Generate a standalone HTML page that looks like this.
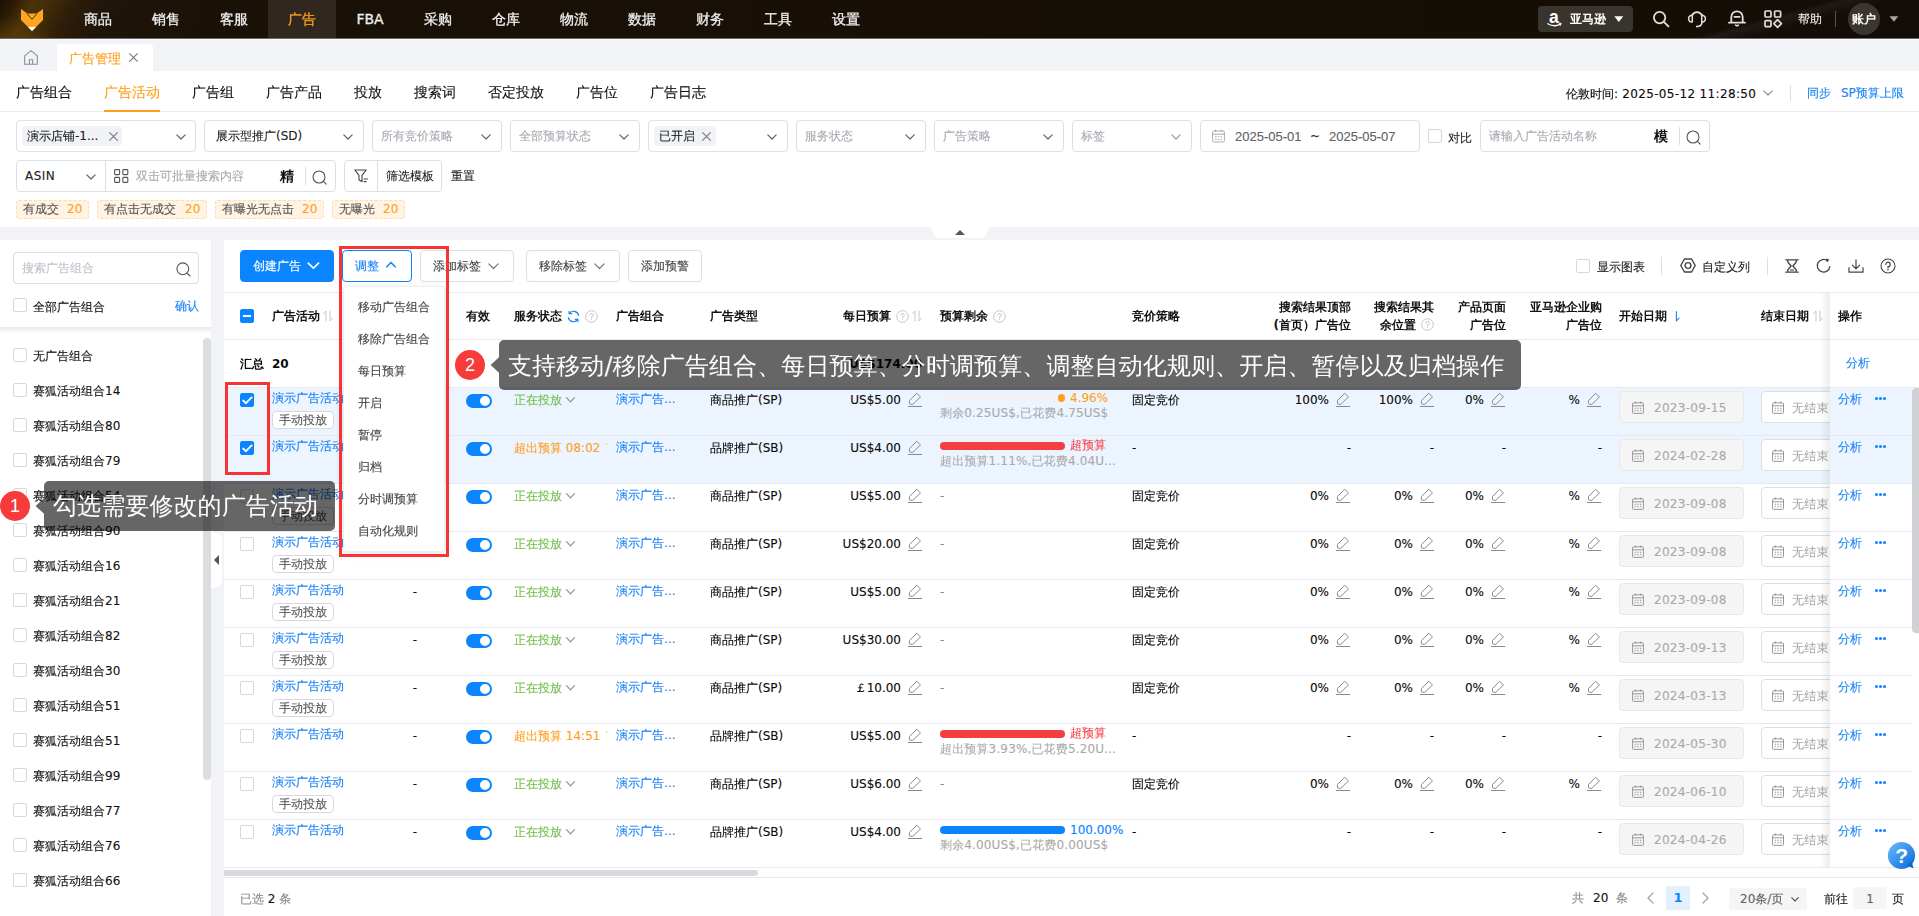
<!DOCTYPE html>
<html lang="zh-CN">
<head>
<meta charset="utf-8">
<title>广告管理</title>
<style>
*{box-sizing:border-box;margin:0;padding:0}
html,body{width:1919px;height:916px;overflow:hidden}
body{position:relative;background:#f2f3f7;font-family:"DejaVu Sans","WenQuanYi Zen Hei","Liberation Sans",sans-serif;font-size:12px;color:#0a0a0a;line-height:1;-webkit-text-stroke:.12px}
.abs{position:absolute}
.t{position:absolute;white-space:nowrap;line-height:16px;height:16px}
.b{font-weight:800;-webkit-text-stroke:0}
svg{position:absolute;overflow:visible}
/* top nav */
#nav{position:absolute;left:0;top:0;width:1919px;height:38px;background:linear-gradient(90deg,#1a1107 0%,#181006 40%,#130d07 100%);overflow:hidden}
#navb{position:absolute;left:0;top:38px;width:1919px;height:2px;background:linear-gradient(180deg,#6f6a65 0,#6f6a65 1px,#fafafc 1px,#fafafc 2px);z-index:2}
#nav .glow{position:absolute;left:0;top:0;width:200px;height:38px;background:linear-gradient(118deg,#191004 0%,#2c1c06 7%,#4b3209 15%,#452d08 22%,#2e1e08 34%,#1f150a 50%,rgba(19,13,7,0) 100%)}
#nav .glow2{position:absolute;left:-10px;top:16px;width:70px;height:30px;background:radial-gradient(ellipse at 10% 100%,rgba(110,72,10,.6),rgba(110,72,10,0) 70%)}
#nav .streak{position:absolute;left:1620px;top:0;width:300px;height:38px;background:linear-gradient(165deg,rgba(255,255,255,0) 48%,rgba(255,255,255,.05) 52%,rgba(255,255,255,0) 62%)}
#nav .act{position:absolute;left:268px;top:0;width:68px;height:38px;background:#30271f}
#nav .mi{position:absolute;top:0;height:38px;width:68px;text-align:center;line-height:38px;font-size:14px;color:#efefef;-webkit-text-stroke:.3px #efefef}
#nav .mi.on{color:#ff9f1a;-webkit-text-stroke:.3px #ff9f1a}
/* tab bar */
#tabs{position:absolute;left:0;top:38px;width:1919px;height:33px;background:#f2f3f7}
#tabs .tab{position:absolute;left:57px;top:6px;width:96px;height:27px;background:#fff;border-radius:4px 4px 0 0}
/* subnav */
#subnav{position:absolute;left:0;top:71px;width:1919px;height:41px;background:#fff;border-bottom:1px solid #e8e9ed}
#subnav .si{position:absolute;top:12px;font-size:14px;line-height:18px;color:#111;white-space:nowrap}
#subnav .si.on{color:#ff9f1a}
#subnav .ul{position:absolute;left:104px;top:39px;width:56px;height:2px;background:#ff9f1a}
/* filter */
#filter{position:absolute;left:0;top:112px;width:1919px;height:115px;background:#fff}
.box{position:absolute;height:32px;border:1px solid #dcdfe6;border-radius:4px;background:#fff}
.ph{color:#a8abb2}
.chev{stroke:#5f6368;stroke-width:1.2;fill:none;stroke-linecap:round;stroke-linejoin:round}
.tag{position:absolute;height:20px;background:#f0f2f5;border-radius:4px}
.otag{position:absolute;top:88px;height:19px;border:1px dashed #ffdcad;background:#fff3e3;border-radius:3px;font-size:12px;line-height:17px;white-space:nowrap;color:#555}
.otag i{font-style:normal;color:#ff9f1a;position:absolute;top:0}
.cb{position:absolute;width:14px;height:14px;border:1px solid #d5d8df;border-radius:2px;background:#fff}
.cb.on{background:#0a84ff;border-color:#0a84ff}
/* side */
#side{position:absolute;left:0;top:240px;width:211px;height:676px;background:#fff;overflow:hidden}
#side .it{position:absolute;left:33px;height:16px;line-height:16px;white-space:nowrap;color:#111}
/* main */
#main{position:absolute;left:224px;top:240px;width:1695px;height:676px;background:#fff;overflow:hidden}
.btn{position:absolute;top:10px;height:32px;border:1px solid #dcdfe6;border-radius:4px;background:#fff;color:#444;line-height:30px;white-space:nowrap}
.hline{position:absolute;left:0;width:1695px;height:1px;background:#e8e9ed}
.th{-webkit-text-stroke:0;position:absolute;white-space:nowrap;font-weight:800;color:#111;line-height:18px}
.row{position:absolute;left:0;width:1695px;height:48px;box-shadow:inset 0 1px 0 #e8e9ed;background:#fff}
.row.sel{background:#ecf5ff}
.row .c{position:absolute;white-space:nowrap;line-height:16px;height:16px;top:5px}
.row .r{text-align:right}
.lk{color:#1b82f5}
.gr{color:#6fbf4c}
.or{color:#ff9f1a}
.rd{color:#f5474b}
.mt{position:absolute;left:48px;top:24px;width:62px;height:18px;border:1px solid #d9d9d9;border-radius:4px;background:#fff;color:#555;line-height:16px;text-align:center}
.sw{position:absolute;left:242px;top:7px;width:26px;height:14px;border-radius:7px;background:#0a84ff}
.sw:after{content:"";position:absolute;right:2px;top:2px;width:10px;height:10px;border-radius:5px;background:#fff}
.din{position:absolute;top:4px;height:32px;border-radius:4px}
.din.s{left:1395px;width:125px;background:#f5f5f5;border:1px solid #e8e8e8;color:#aaa}
.din.e{left:1537px;width:124px;background:#fff;border:1px solid #dcdfe6;color:#aaa}
.din span{position:absolute;top:8px;line-height:16px;white-space:nowrap;letter-spacing:.3px}
.bar{position:absolute;left:716px;top:7px;width:125px;height:8px;border-radius:4px}
.sub{position:absolute;left:716px;top:18px;color:#aaa;line-height:16px;white-space:nowrap;letter-spacing:.15px}
.pen{stroke:#8a8a8a;stroke-width:1;fill:none;stroke-linecap:round;stroke-linejoin:round}
#fix{position:absolute;left:1606px;top:52px;width:82px;height:576px;background:#fff}
/* overlays */
.ov{-webkit-text-stroke:0;position:absolute;background:rgba(0,0,0,.6);border-radius:5px;letter-spacing:.1px;color:#fff;font-size:24px;white-space:nowrap}
.num{position:absolute;width:30px;height:30px;border-radius:15px;background:#f73b3b;color:#fff;font:18px/30px 'Liberation Sans',sans-serif;text-align:center;-webkit-text-stroke:0}
.redbox{position:absolute;border:3px solid #f63434}

</style>
</head>
<body>
<div id="nav">
  <div class="glow"></div><div class="glow2"></div><div class="streak"></div>
  <div class="act"></div>
  <svg style="left:20px;top:8px" width="24" height="24" viewBox="0 0 24 24"><path d="M1 1 L7.3 5.6 L16.7 5.6 L23 1 L23 12 L12 23 L1 12 Z" fill="#ffa51f"/><path d="M7 5.6 L12 11.3 L17 5.6" fill="none" stroke="#3a2608" stroke-width="0.9"/><path d="M8 19 L16 19 L12 23 Z" fill="#fff"/></svg>
  <div class="mi" style="left:64px">商品</div>
  <div class="mi" style="left:132px">销售</div>
  <div class="mi" style="left:200px">客服</div>
  <div class="mi on" style="left:268px">广告</div>
  <div class="mi" style="left:336px">FBA</div>
  <div class="mi" style="left:404px">采购</div>
  <div class="mi" style="left:472px">仓库</div>
  <div class="mi" style="left:540px">物流</div>
  <div class="mi" style="left:608px">数据</div>
  <div class="mi" style="left:676px">财务</div>
  <div class="mi" style="left:744px">工具</div>
  <div class="mi" style="left:812px">设置</div>
  <div class="abs" style="left:1538px;top:6px;width:95px;height:26px;border-radius:4px;background:#3a342e"></div>
  <svg style="left:1547px;top:10px" width="16" height="17" viewBox="0 0 16 17"><text x="2" y="12.7" font-family="Liberation Sans,sans-serif" font-weight="700" font-size="17.5" fill="#fff">a</text><path d="M0.8 13.8 Q7.5 17.6 13.4 14" fill="none" stroke="#fff" stroke-width="1.3" stroke-linecap="round"/><path d="M12 13.2 L14.2 13.4 L13.3 15.4" fill="none" stroke="#fff" stroke-width="1" stroke-linejoin="round" stroke-linecap="round"/></svg>
  <div class="t b" style="left:1570px;top:11px;color:#fff">亚马逊</div>
  <svg style="left:1614px;top:16px" width="10" height="6" viewBox="0 0 10 6"><path d="M0.3 0.2 L9.3 0.2 L4.8 6 Z" fill="#fff"/></svg>
  <svg style="left:1652px;top:10px" width="18" height="18" viewBox="0 0 18 18"><circle cx="7.6" cy="7.6" r="5.7" fill="none" stroke="#e2dfdb" stroke-width="1.8"/><path d="M11.9 11.9 L16.4 16.4" stroke="#e2dfdb" stroke-width="1.9" stroke-linecap="round"/></svg>
  <svg style="left:1687px;top:10px" width="20" height="18" viewBox="0 0 20 18"><path d="M5.2 5.2 A5.3 5.3 0 0 1 14.8 5.2" fill="none" stroke="#e2dfdb" stroke-width="1.7" stroke-linecap="round"/><path d="M5.3 5 C2.2 5.6 1.2 7.6 1.7 9.6 C2.2 11.4 3.8 12.2 5.3 12 Z" fill="none" stroke="#e2dfdb" stroke-width="1.5" stroke-linejoin="round"/><path d="M14.7 5 C17.8 5.6 18.8 7.6 18.3 9.6 C17.8 11.4 16.2 12.2 14.7 12 Z" fill="none" stroke="#e2dfdb" stroke-width="1.5" stroke-linejoin="round"/><path d="M15 12 C15 15 13 16.6 9.6 16.6" fill="none" stroke="#e2dfdb" stroke-width="1.6" stroke-linecap="round"/></svg>
  <svg style="left:1728px;top:8px" width="18" height="19" viewBox="0 0 18 19"><path d="M3.3 14.4 L3.3 9 A5.7 5.7 0 0 1 14.7 9 L14.7 14.4" fill="none" stroke="#e2dfdb" stroke-width="1.8"/><path d="M1 14.7 L17 14.7" stroke="#e2dfdb" stroke-width="1.8" stroke-linecap="round"/><path d="M6.4 8.8 L11.6 8.8" stroke="#e2dfdb" stroke-width="1.7" stroke-linecap="round"/><path d="M7.6 17.2 Q9 18.4 10.4 17.2" fill="none" stroke="#e2dfdb" stroke-width="1.6" stroke-linecap="round"/></svg>
  <svg style="left:1764px;top:10px" width="18" height="18" viewBox="0 0 18 18"><rect x="1" y="1" width="6" height="6" rx="1" fill="none" stroke="#e2dfdb" stroke-width="1.7"/><rect x="10.6" y="1" width="6" height="6" rx="1" fill="none" stroke="#e2dfdb" stroke-width="1.7"/><rect x="1" y="10.6" width="6" height="6" rx="1" fill="none" stroke="#e2dfdb" stroke-width="1.7"/><path d="M13.6 9.6 L17.4 13.6 L13.6 17.4 L9.8 13.6 Z" fill="none" stroke="#e2dfdb" stroke-width="1.6" stroke-linejoin="round"/></svg>
  <div class="t" style="left:1798px;top:11px;color:#ececec">帮助</div>
  <div class="abs" style="left:1835px;top:11px;width:1px;height:16px;background:#5a554f"></div>
  <div class="abs" style="left:1848px;top:3px;width:32px;height:32px;border-radius:16px;background:#3b3530"></div>
  <div class="t b" style="left:1852px;top:11px;color:#fff">账户</div>
  <svg style="left:1889px;top:16px" width="10" height="6" viewBox="0 0 10 6"><path d="M0.5 0.2 L9.3 0.2 L4.9 5.8 Z" fill="#a9a6a2"/></svg>
</div>
<div id="navb"></div>
<div id="tabs">
  <svg style="left:24px;top:12px" width="14" height="15" viewBox="0 0 14 15"><path d="M0.7 5.8 L7 0.6 L13.3 5.8 L13.3 14.2 L0.7 14.2 Z" fill="none" stroke="#8a8f99" stroke-width="1.1" stroke-linejoin="round"/><path d="M5.4 14.2 L5.4 9.8 L8.6 9.8 L8.6 14.2" fill="none" stroke="#8a8f99" stroke-width="1.1"/></svg>
  <div class="tab"></div>
  <div class="t" style="left:69px;top:13px;font-size:13px;color:#ff9f1a">广告管理</div>
  <svg style="left:129px;top:15px" width="9" height="9" viewBox="0 0 9 9"><path d="M0.6 0.6 L8.4 8.4 M8.4 0.6 L0.6 8.4" stroke="#73777f" stroke-width="1.1" stroke-linecap="round"/></svg>
</div>
<div id="subnav">
  <div class="si" style="left:16px">广告组合</div>
  <div class="si on" style="left:104px">广告活动</div>
  <div class="si" style="left:192px">广告组</div>
  <div class="si" style="left:266px">广告产品</div>
  <div class="si" style="left:354px">投放</div>
  <div class="si" style="left:414px">搜索词</div>
  <div class="si" style="left:488px">否定投放</div>
  <div class="si" style="left:576px">广告位</div>
  <div class="si" style="left:650px">广告日志</div>
  <div class="ul"></div>
  <div class="t" style="left:1566px;top:15px">伦敦时间:<span style="letter-spacing:.35px"> 2025-05-12 11:28:50</span></div>
  <svg style="left:1763px;top:19px" width="10" height="6" viewBox="0 0 10 6"><path class="chev" d="M0.8 0.8 L5 5 L9.2 0.8" style="stroke:#8a8f99"/></svg>
  <div class="abs" style="left:1790px;top:14px;width:1px;height:16px;background:#dcdfe6"></div>
  <div class="t lk" style="left:1807px;top:14px">同步</div>
  <div class="t lk" style="left:1841px;top:14px">SP预算上限</div>
</div>
<div id="filter">
  <!-- row 1: y 120-152 => top 8 -->
  <div class="box" style="left:16px;top:8px;width:180px"></div>
  <div class="tag" style="left:22px;top:14px;width:100px"></div>
  <div class="t" style="left:27px;top:16px;color:#222">演示店铺-1...</div>
  <svg style="left:109px;top:20px" width="9" height="9" viewBox="0 0 9 9"><path d="M0.6 0.6 L8.4 8.4 M8.4 0.6 L0.6 8.4" stroke="#73777f" stroke-width="1.1" stroke-linecap="round"/></svg>
  <svg style="left:176px;top:22px" width="10" height="6" viewBox="0 0 10 6"><path class="chev" d="M0.8 0.8 L5 5 L9.2 0.8"/></svg>

  <div class="box" style="left:204px;top:8px;width:160px"></div>
  <div class="t" style="left:216px;top:16px;color:#222">展示型推广(SD)</div>
  <svg style="left:343px;top:22px" width="10" height="6" viewBox="0 0 10 6"><path class="chev" d="M0.8 0.8 L5 5 L9.2 0.8"/></svg>

  <div class="box" style="left:372px;top:8px;width:130px"></div>
  <div class="t ph" style="left:381px;top:16px">所有竞价策略</div>
  <svg style="left:481px;top:22px" width="10" height="6" viewBox="0 0 10 6"><path class="chev" d="M0.8 0.8 L5 5 L9.2 0.8"/></svg>

  <div class="box" style="left:510px;top:8px;width:130px"></div>
  <div class="t ph" style="left:519px;top:16px">全部预算状态</div>
  <svg style="left:619px;top:22px" width="10" height="6" viewBox="0 0 10 6"><path class="chev" d="M0.8 0.8 L5 5 L9.2 0.8"/></svg>

  <div class="box" style="left:648px;top:8px;width:140px"></div>
  <div class="tag" style="left:654px;top:14px;width:62px"></div>
  <div class="t" style="left:659px;top:16px;color:#222">已开启</div>
  <svg style="left:702px;top:20px" width="9" height="9" viewBox="0 0 9 9"><path d="M0.6 0.6 L8.4 8.4 M8.4 0.6 L0.6 8.4" stroke="#73777f" stroke-width="1.1" stroke-linecap="round"/></svg>
  <svg style="left:767px;top:22px" width="10" height="6" viewBox="0 0 10 6"><path class="chev" d="M0.8 0.8 L5 5 L9.2 0.8"/></svg>

  <div class="box" style="left:796px;top:8px;width:130px"></div>
  <div class="t ph" style="left:805px;top:16px">服务状态</div>
  <svg style="left:905px;top:22px" width="10" height="6" viewBox="0 0 10 6"><path class="chev" d="M0.8 0.8 L5 5 L9.2 0.8"/></svg>

  <div class="box" style="left:934px;top:8px;width:130px"></div>
  <div class="t ph" style="left:943px;top:16px">广告策略</div>
  <svg style="left:1043px;top:22px" width="10" height="6" viewBox="0 0 10 6"><path class="chev" d="M0.8 0.8 L5 5 L9.2 0.8"/></svg>

  <div class="box" style="left:1072px;top:8px;width:120px"></div>
  <div class="t ph" style="left:1081px;top:16px">标签</div>
  <svg style="left:1171px;top:22px" width="10" height="6" viewBox="0 0 10 6"><path class="chev" d="M0.8 0.8 L5 5 L9.2 0.8" style="stroke:#9a9ea6"/></svg>

  <div class="box" style="left:1200px;top:8px;width:220px"></div>
  <svg style="left:1212px;top:17px" width="13" height="14" viewBox="0 0 13 14"><rect x="0.6" y="2" width="11.8" height="11" rx="1.2" fill="none" stroke="#a8abb2" stroke-width="1"/><path d="M0.6 5.2 L12.4 5.2 M3.6 0.6 L3.6 3 M9.4 0.6 L9.4 3" stroke="#a8abb2" stroke-width="1"/><path d="M3 7.8 L10 7.8 M3 10.4 L10 10.4" stroke="#a8abb2" stroke-width="1" stroke-dasharray="1.6 1.1"/></svg>
  <div class="t" style="left:1235px;top:17px;font:13px/16px 'Liberation Sans',sans-serif;color:#606266">2025-05-01</div>
  <div class="t" style="left:1310px;top:16px;color:#333">~</div>
  <div class="t" style="left:1329px;top:17px;font:13px/16px 'Liberation Sans',sans-serif;color:#606266">2025-05-07</div>

  <div class="cb" style="left:1428px;top:17px"></div>
  <div class="t" style="left:1448px;top:18px;color:#222">对比</div>

  <div class="box" style="left:1480px;top:8px;width:230px"></div>
  <div class="t ph" style="left:1489px;top:16px">请输入广告活动名称</div>
  <div class="t b" style="left:1654px;top:16px;font-size:14px;color:#111">模</div>
  <div class="abs" style="left:1679px;top:15px;width:1px;height:18px;background:#dcdfe6"></div>
  <svg style="left:1686px;top:18px" width="15" height="15" viewBox="0 0 15 15"><circle cx="7" cy="7" r="6" fill="none" stroke="#555" stroke-width="1.1"/><path d="M11.4 11.4 L14.2 14.2" stroke="#555" stroke-width="1.1" stroke-linecap="round"/></svg>

  <!-- row 2: y 160-192 => top 48 -->
  <div class="box" style="left:16px;top:48px;width:320px"></div>
  <div class="abs" style="left:105px;top:49px;width:1px;height:30px;background:#dcdfe6"></div>
  <div class="t" style="left:25px;top:56px;color:#222;letter-spacing:.45px">ASIN</div>
  <svg style="left:86px;top:62px" width="10" height="6" viewBox="0 0 10 6"><path class="chev" d="M0.8 0.8 L5 5 L9.2 0.8"/></svg>
  <svg style="left:114px;top:57px" width="15" height="14" viewBox="0 0 15 14"><rect x="0.6" y="0.6" width="5" height="5" rx="0.8" fill="none" stroke="#555" stroke-width="1.1"/><rect x="8.8" y="0.6" width="5" height="5" rx="0.8" fill="none" stroke="#555" stroke-width="1.1"/><rect x="0.6" y="8.4" width="5" height="5" rx="0.8" fill="none" stroke="#555" stroke-width="1.1"/><rect x="8.8" y="8.4" width="5" height="5" rx="0.8" fill="none" stroke="#555" stroke-width="1.1"/></svg>
  <div class="t ph" style="left:136px;top:56px">双击可批量搜索内容</div>
  <div class="t b" style="left:280px;top:56px;font-size:14px;color:#111">精</div>
  <div class="abs" style="left:305px;top:55px;width:1px;height:18px;background:#dcdfe6"></div>
  <svg style="left:312px;top:58px" width="15" height="15" viewBox="0 0 15 15"><circle cx="7" cy="7" r="6" fill="none" stroke="#555" stroke-width="1.1"/><path d="M11.4 11.4 L14.2 14.2" stroke="#555" stroke-width="1.1" stroke-linecap="round"/></svg>

  <div class="box" style="left:344px;top:48px;width:98px"></div>
  <div class="abs" style="left:377px;top:49px;width:1px;height:30px;background:#dcdfe6"></div>
  <svg style="left:354px;top:57px" width="15" height="15" viewBox="0 0 15 15"><path d="M0.8 1 L12.2 1 L8 6.4 L8 12.6 L5 11 L5 6.4 Z" fill="none" stroke="#444" stroke-width="1.1" stroke-linejoin="round"/><path d="M10 10 L13.6 10 M10 12.6 L12.2 12.6" stroke="#444" stroke-width="1.1" stroke-linecap="round"/></svg>
  <div class="t" style="left:386px;top:56px;color:#222">筛选模板</div>
  <div class="t" style="left:451px;top:56px;color:#222">重置</div>

  <!-- tags row -->
  <div class="otag" style="left:16px;width:73px"><span style="position:absolute;left:6px">有成交</span><i style="left:50px">20</i></div>
  <div class="otag" style="left:97px;width:110px"><span style="position:absolute;left:6px">有点击无成交</span><i style="left:87px">20</i></div>
  <div class="otag" style="left:215px;width:109px"><span style="position:absolute;left:6px">有曝光无点击</span><i style="left:86px">20</i></div>
  <div class="otag" style="left:332px;width:73px"><span style="position:absolute;left:6px">无曝光</span><i style="left:50px">20</i></div>
</div>
<!-- collapse handle top -->
<svg style="left:931px;top:227px" width="58" height="12" viewBox="0 0 58 12"><path d="M0 0 L58 0 L55 8 Q53.6 11 50.6 11 L7.4 11 Q4.4 11 3 8 Z" fill="#fff"/><path d="M24 8 L34 8 L29 3 Z" fill="#555"/></svg>

<div id="side">
  <div class="box" style="left:13px;top:12px;width:186px"></div>
  <div class="t" style="left:22px;top:20px;color:#c0c4cc">搜索广告组合</div>
  <svg style="left:176px;top:22px" width="15" height="15" viewBox="0 0 15 15"><circle cx="6.8" cy="6.8" r="5.9" fill="none" stroke="#555" stroke-width="1.1"/><path d="M11.1 11.1 L14 14" stroke="#555" stroke-width="1.1" stroke-linecap="round"/></svg>
  <div class="cb" style="left:13px;top:58px"></div>
  <div class="it" style="top:59px">全部广告组合</div>
  <div class="t lk" style="left:175px;top:58px">确认</div>
  <div class="abs" style="left:0;top:87px;width:211px;height:6px;background:linear-gradient(180deg,rgba(0,0,0,.085),rgba(0,0,0,0))"></div>
  <div class="cb" style="left:13px;top:108px"></div><div class="it" style="top:108px">无广告组合</div>
  <div class="cb" style="left:13px;top:143px"></div><div class="it" style="top:143px">赛狐活动组合14</div>
  <div class="cb" style="left:13px;top:178px"></div><div class="it" style="top:178px">赛狐活动组合80</div>
  <div class="cb" style="left:13px;top:213px"></div><div class="it" style="top:213px">赛狐活动组合79</div>
  <div class="cb" style="left:13px;top:248px"></div><div class="it" style="top:248px">赛狐活动组合54</div>
  <div class="cb" style="left:13px;top:283px"></div><div class="it" style="top:283px">赛狐活动组合90</div>
  <div class="cb" style="left:13px;top:318px"></div><div class="it" style="top:318px">赛狐活动组合16</div>
  <div class="cb" style="left:13px;top:353px"></div><div class="it" style="top:353px">赛狐活动组合21</div>
  <div class="cb" style="left:13px;top:388px"></div><div class="it" style="top:388px">赛狐活动组合82</div>
  <div class="cb" style="left:13px;top:423px"></div><div class="it" style="top:423px">赛狐活动组合30</div>
  <div class="cb" style="left:13px;top:458px"></div><div class="it" style="top:458px">赛狐活动组合51</div>
  <div class="cb" style="left:13px;top:493px"></div><div class="it" style="top:493px">赛狐活动组合51</div>
  <div class="cb" style="left:13px;top:528px"></div><div class="it" style="top:528px">赛狐活动组合99</div>
  <div class="cb" style="left:13px;top:563px"></div><div class="it" style="top:563px">赛狐活动组合77</div>
  <div class="cb" style="left:13px;top:598px"></div><div class="it" style="top:598px">赛狐活动组合76</div>
  <div class="cb" style="left:13px;top:633px"></div><div class="it" style="top:633px">赛狐活动组合66</div>
  <div class="abs" style="left:203px;top:98px;width:8px;height:442px;border-radius:4px;background:#dcdde0"></div>
</div>
<!-- side collapse handle -->
<svg style="left:211px;top:531px" width="12" height="58" viewBox="0 0 12 58"><path d="M0 0 L8 3 Q11 4.4 11 7.4 L11 50.6 Q11 53.6 8 55 L0 58 Z" fill="#fff"/><path d="M8 24 L8 34 L3 29 Z" fill="#555"/></svg>

<div id="main">
  <!-- toolbar -->
  <div class="btn" style="left:16px;width:94px;background:#0a84ff;border-color:#0a84ff"></div>
  <div class="t" style="left:29px;top:18px;color:#fff">创建广告</div>
  <svg style="left:83px;top:22px" width="13" height="8" viewBox="0 0 13 8"><path d="M1.2 1.2 L6.4 6.2 L11.6 1.2" fill="none" stroke="#fff" stroke-width="1.7" stroke-linecap="round" stroke-linejoin="round"/></svg>
  <div class="btn" style="left:118px;width:70px;border-color:#0a84ff"></div>
  <div class="t" style="left:131px;top:18px;color:#1b82f5">调整</div>
  <svg style="left:162px;top:21px" width="10" height="7" viewBox="0 0 10 7"><path d="M0.8 5.8 L5 1.4 L9.2 5.8" fill="none" stroke="#1b82f5" stroke-width="1.5" stroke-linecap="round" stroke-linejoin="round"/></svg>
  <div class="btn" style="left:196px;width:94px"></div>
  <div class="t" style="left:209px;top:18px;color:#444">添加标签</div>
  <svg style="left:264px;top:23px" width="11" height="7" viewBox="0 0 11 7"><path class="chev" d="M0.8 0.8 L5.5 5.5 L10.2 0.8" style="stroke:#777"/></svg>
  <div class="btn" style="left:302px;width:94px"></div>
  <div class="t" style="left:315px;top:18px;color:#444">移除标签</div>
  <svg style="left:370px;top:23px" width="11" height="7" viewBox="0 0 11 7"><path class="chev" d="M0.8 0.8 L5.5 5.5 L10.2 0.8" style="stroke:#777"/></svg>
  <div class="btn" style="left:404px;width:74px"></div>
  <div class="t" style="left:417px;top:18px;color:#444">添加预警</div>

  <div class="cb" style="left:1352px;top:19px"></div>
  <div class="t" style="left:1373px;top:19px;color:#222">显示图表</div>
  <div class="abs" style="left:1437px;top:17px;width:1px;height:18px;background:#dcdfe6"></div>
  <svg style="left:1456px;top:18px" width="16" height="15" viewBox="0 0 16 15"><path d="M4.4 1 L11.6 1 L15.2 7.5 L11.6 14 L4.4 14 L0.8 7.5 Z" fill="none" stroke="#444" stroke-width="1.4" stroke-linejoin="round"/><circle cx="8" cy="7.5" r="2.9" fill="none" stroke="#444" stroke-width="1.4"/></svg>
  <div class="t" style="left:1478px;top:19px;color:#222">自定义列</div>
  <div class="abs" style="left:1543px;top:17px;width:1px;height:18px;background:#dcdfe6"></div>
  <svg style="left:1561px;top:19px" width="14" height="14" viewBox="0 0 14 14"><path d="M0.8 0.8 L13.2 0.8 M0.8 13.2 L13.2 13.2" stroke="#444" stroke-width="1.3" stroke-linecap="round"/><path d="M2.8 1 L2.8 3.2 L6.2 7 L2.8 10.8 L2.8 13 M11.2 1 L11.2 3.2 L7.8 7 L11.2 10.8 L11.2 13" fill="none" stroke="#444" stroke-width="1.3" stroke-linejoin="round"/><path d="M5.2 11 L8.8 11" stroke="#444" stroke-width="1.2"/></svg>
  <svg style="left:1592px;top:18px" width="15" height="15" viewBox="0 0 15 15"><path d="M11.6 2.9 A6.3 6.3 0 1 0 13.8 8.6" fill="none" stroke="#444" stroke-width="1.3" stroke-linecap="round"/><path d="M10 0.6 L13.4 1.6 L11 4.4 Z" fill="#444"/></svg>
  <svg style="left:1624px;top:19px" width="16" height="14" viewBox="0 0 16 14"><path d="M8 0.8 L8 9.6 M4.4 6.2 L8 9.8 L11.6 6.2" fill="none" stroke="#444" stroke-width="1.2" stroke-linecap="round" stroke-linejoin="round"/><path d="M1 8.6 L1 13.2 L15 13.2 L15 8.6" fill="none" stroke="#444" stroke-width="1.2" stroke-linecap="round" stroke-linejoin="round"/></svg>
  <svg style="left:1656px;top:18px" width="16" height="16" viewBox="0 0 16 16"><circle cx="8" cy="8" r="7" fill="none" stroke="#444" stroke-width="1.1"/><path d="M5.8 6.4 A2.2 2.2 0 1 1 8 8.6 L8 9.8" fill="none" stroke="#444" stroke-width="1.2" stroke-linecap="round"/><circle cx="8" cy="11.8" r="0.8" fill="#444"/></svg>

  <!-- header -->
  <div class="hline" style="top:52px"></div>
  <div class="hline" style="top:99px"></div>
  <div class="cb on" style="left:16px;top:69px"><span class="abs" style="left:2px;top:5px;width:8px;height:2px;background:#fff"></span></div>
  <div class="th" style="left:48px;top:67px">广告活动</div>
  <svg style="left:99px;top:70px" width="10" height="12" viewBox="0 0 10 12"><path d="M3 11 L3 1 L0.8 3.6 M7 1 L7 11 L9.2 8.4" fill="none" stroke="#c4c7cd" stroke-width="1" stroke-linecap="round" stroke-linejoin="round"/></svg>
  <div class="th" style="left:242px;top:67px">有效</div>
  <div class="th" style="left:290px;top:67px">服务状态</div>
  <svg style="left:343px;top:70px" width="13" height="13" viewBox="0 0 13 13"><path d="M11.6 5.4 A5.2 5.2 0 0 0 2.2 3.6 M1.4 7.6 A5.2 5.2 0 0 0 10.8 9.4" fill="none" stroke="#1b82f5" stroke-width="1.2" stroke-linecap="round"/><path d="M2 1.2 L2.2 3.8 L4.8 3.6 M11 11.8 L10.8 9.2 L8.2 9.4" fill="none" stroke="#1b82f5" stroke-width="1.1" stroke-linecap="round" stroke-linejoin="round"/></svg>
  <svg style="left:361px;top:70px" width="13" height="13" viewBox="0 0 13 13"><circle cx="6.5" cy="6.5" r="5.8" fill="none" stroke="#c4c7cd" stroke-width="1"/><path d="M4.8 5.2 A1.7 1.7 0 1 1 6.5 6.9 L6.5 7.9" fill="none" stroke="#c4c7cd" stroke-width="1" stroke-linecap="round"/><circle cx="6.5" cy="9.6" r="0.6" fill="#c4c7cd"/></svg>
  <div class="th" style="left:392px;top:67px">广告组合</div>
  <div class="th" style="left:486px;top:67px">广告类型</div>
  <div class="th" style="left:619px;top:67px">每日预算</div>
  <svg style="left:672px;top:70px" width="13" height="13" viewBox="0 0 13 13"><circle cx="6.5" cy="6.5" r="5.8" fill="none" stroke="#c4c7cd" stroke-width="1"/><path d="M4.8 5.2 A1.7 1.7 0 1 1 6.5 6.9 L6.5 7.9" fill="none" stroke="#c4c7cd" stroke-width="1" stroke-linecap="round"/><circle cx="6.5" cy="9.6" r="0.6" fill="#c4c7cd"/></svg>
  <svg style="left:688px;top:70px" width="10" height="12" viewBox="0 0 10 12"><path d="M3 11 L3 1 L0.8 3.6 M7 1 L7 11 L9.2 8.4" fill="none" stroke="#c4c7cd" stroke-width="1" stroke-linecap="round" stroke-linejoin="round"/></svg>
  <div class="th" style="left:716px;top:67px">预算剩余</div>
  <svg style="left:769px;top:70px" width="13" height="13" viewBox="0 0 13 13"><circle cx="6.5" cy="6.5" r="5.8" fill="none" stroke="#c4c7cd" stroke-width="1"/><path d="M4.8 5.2 A1.7 1.7 0 1 1 6.5 6.9 L6.5 7.9" fill="none" stroke="#c4c7cd" stroke-width="1" stroke-linecap="round"/><circle cx="6.5" cy="9.6" r="0.6" fill="#c4c7cd"/></svg>
  <div class="th" style="left:908px;top:67px">竞价策略</div>
  <div class="th" style="right:568px;top:58px;text-align:right">搜索结果顶部<br>(首页）广告位</div>
  <div class="th" style="right:485px;top:58px;text-align:right">搜索结果其<br>余位置<span style="display:inline-block;width:18px"></span></div>
  <svg style="left:1197px;top:78px" width="13" height="13" viewBox="0 0 13 13"><circle cx="6.5" cy="6.5" r="5.8" fill="none" stroke="#c4c7cd" stroke-width="1"/><path d="M4.8 5.2 A1.7 1.7 0 1 1 6.5 6.9 L6.5 7.9" fill="none" stroke="#c4c7cd" stroke-width="1" stroke-linecap="round"/><circle cx="6.5" cy="9.6" r="0.6" fill="#c4c7cd"/></svg>
  <div class="th" style="right:413px;top:58px;text-align:right">产品页面<br>广告位</div>
  <div class="th" style="right:317px;top:58px;text-align:right">亚马逊企业购<br>广告位</div>
  <div class="th" style="left:1395px;top:67px">开始日期</div>
  <svg style="left:1451px;top:71px" width="5" height="11" viewBox="0 0 5 11"><path d="M1.4 0.6 L1.4 10 L4 7.2" fill="none" stroke="#1b82f5" stroke-width="1.1" stroke-linecap="round" stroke-linejoin="round"/></svg>
  <div class="th" style="left:1537px;top:67px">结束日期</div>
  <svg style="left:1589px;top:70px" width="10" height="12" viewBox="0 0 10 12"><path d="M3 11 L3 1 L0.8 3.6 M7 1 L7 11 L9.2 8.4" fill="none" stroke="#c4c7cd" stroke-width="1" stroke-linecap="round" stroke-linejoin="round"/></svg>

  <!-- summary row -->
  <div class="hline" style="top:147px"></div>
  <div class="t b" style="left:16px;top:116px">汇总</div>
  <div class="t b" style="left:48px;top:116px">20</div>
  <div class="t b" style="right:997px;top:116px">US$174.00</div>

  <!-- footer -->
  <div class="hline" style="top:627px"></div>
  <div class="abs" style="left:0;top:630px;width:534px;height:6px;border-radius:0 3px 3px 0;background:#d8d9dc"></div>
  <div class="hline" style="top:637px"></div>
  <div class="t" style="left:16px;top:651px;color:#888">已选 <span style="color:#111">2</span> 条</div>
  <div class="t" style="left:1348px;top:650px;color:#888">共</div>
  <div class="t" style="left:1369px;top:650px;color:#111">20</div>
  <div class="t" style="left:1392px;top:650px;color:#888">条</div>
  <svg style="left:1423px;top:652px" width="7" height="12" viewBox="0 0 7 12"><path d="M6 1 L1 6 L6 11" fill="none" stroke="#a0a3aa" stroke-width="1.3" stroke-linecap="round" stroke-linejoin="round"/></svg>
  <div class="abs" style="left:1442px;top:646px;width:24px;height:24px;background:#e3f0fe"></div>
  <div class="t b" style="left:1442px;top:650px;width:24px;text-align:center;font-size:13px;color:#0a84ff">1</div>
  <svg style="left:1478px;top:652px" width="7" height="12" viewBox="0 0 7 12"><path d="M1 1 L6 6 L1 11" fill="none" stroke="#a0a3aa" stroke-width="1.3" stroke-linecap="round" stroke-linejoin="round"/></svg>
  <div class="abs" style="left:1505px;top:648px;width:78px;height:22px;border-radius:3px;background:#f5f5f5"></div>
  <div class="t" style="left:1516px;top:651px;color:#606266">20条/页</div>
  <svg style="left:1567px;top:657px" width="8" height="5" viewBox="0 0 8 5"><path d="M0.7 0.7 L4 4 L7.3 0.7" fill="none" stroke="#555" stroke-width="1.1" stroke-linecap="round" stroke-linejoin="round"/></svg>
  <div class="t" style="left:1600px;top:651px;color:#222">前往</div>
  <div class="abs" style="left:1629px;top:647px;width:34px;height:22px;border-radius:3px;background:#f5f5f5"></div>
  <div class="t" style="left:1629px;top:651px;width:34px;text-align:center;color:#606266">1</div>
  <div class="t" style="left:1668px;top:651px;color:#222">页</div>
</div>

<div id="rows" class="abs" style="left:224px;top:387px;width:1688px;height:481px;overflow:hidden">
<div class="row sel" style="top:0px">
<div class="cb on" style="left:16px;top:6px"><svg style="left:1px;top:2px" width="11" height="9" viewBox="0 0 11 9"><path d="M1.2 4.6 L4 7.2 L9.6 1.4" fill="none" stroke="#fff" stroke-width="1.9" stroke-linecap="round" stroke-linejoin="round"/></svg></div>
<div class="c lk" style="left:48px;top:3px">演示广告活动</div>
<div class="mt">手动投放</div>
<div class="c" style="left:188px;width:6px;text-align:center">-</div>
<div class="sw"></div>
<div class="c gr" style="left:290px">正在投放</div><svg style="left:342px;top:10px" width="9" height="6" viewBox="0 0 9 6"><path d="M0.5 0.6 L4.5 4.8 L8.5 0.6" fill="none" stroke="#8a8a8a" stroke-width="1.1" stroke-linecap="round" stroke-linejoin="round"/></svg>
<div class="c lk" style="left:392px;top:4px">演示广告...</div>
<div class="c" style="left:486px">商品推广(SP)</div>
<div class="c r" style="right:1018px">US$5.00</div>
<svg style="left:684px;top:6px" width="14" height="14" viewBox="0 0 14 14"><path class="pen" d="M9 0.6 L12.5 3.9 L4.9 11.3 L2.5 11.3 Q1.5 11.3 1.5 10.2 L1.5 7.8 Z"/><path class="pen" d="M0.3 13.5 L13.8 13.5"/></svg>
<div class="bar" style="background:#f0f2f5"><span class="abs" style="right:0;top:0;width:7px;height:8px;border-radius:4px;background:#ff9f1a"></span></div>
<div class="c or" style="left:846px;top:3px">4.96%</div>
<div class="sub">剩余0.25US$,已花费4.75US$</div>
<div class="c" style="left:908px">固定竞价</div>
<div class="c r" style="right:590px">100%</div>
<svg style="left:1112px;top:6px" width="14" height="14" viewBox="0 0 14 14"><path class="pen" d="M9 0.6 L12.5 3.9 L4.9 11.3 L2.5 11.3 Q1.5 11.3 1.5 10.2 L1.5 7.8 Z"/><path class="pen" d="M0.3 13.5 L13.8 13.5"/></svg>
<div class="c r" style="right:506px">100%</div>
<svg style="left:1196px;top:6px" width="14" height="14" viewBox="0 0 14 14"><path class="pen" d="M9 0.6 L12.5 3.9 L4.9 11.3 L2.5 11.3 Q1.5 11.3 1.5 10.2 L1.5 7.8 Z"/><path class="pen" d="M0.3 13.5 L13.8 13.5"/></svg>
<div class="c r" style="right:435px">0%</div>
<svg style="left:1267px;top:6px" width="14" height="14" viewBox="0 0 14 14"><path class="pen" d="M9 0.6 L12.5 3.9 L4.9 11.3 L2.5 11.3 Q1.5 11.3 1.5 10.2 L1.5 7.8 Z"/><path class="pen" d="M0.3 13.5 L13.8 13.5"/></svg>
<div class="c r" style="right:339px">%</div>
<svg style="left:1363px;top:6px" width="14" height="14" viewBox="0 0 14 14"><path class="pen" d="M9 0.6 L12.5 3.9 L4.9 11.3 L2.5 11.3 Q1.5 11.3 1.5 10.2 L1.5 7.8 Z"/><path class="pen" d="M0.3 13.5 L13.8 13.5"/></svg>
<div class="din s"><svg style="left:12px;top:9px" width="12" height="13" viewBox="0 0 12 13"><rect x="0.5" y="1.8" width="11" height="10.6" rx="1" fill="none" stroke="#9a9a9a" stroke-width="1"/><path d="M0.5 4.8 L11.5 4.8 M3.2 0.4 L3.2 2.8 M8.8 0.4 L8.8 2.8" stroke="#9a9a9a" stroke-width="1"/><path d="M2.6 7.2 L9.6 7.2 M2.6 9.8 L9.6 9.8" stroke="#9a9a9a" stroke-width="1.1" stroke-dasharray="1.5 1.2"/></svg><span style="left:34px">2023-09-15</span></div>
<div class="din e"><svg style="left:10px;top:9px" width="12" height="13" viewBox="0 0 12 13"><rect x="0.5" y="1.8" width="11" height="10.6" rx="1" fill="none" stroke="#9a9a9a" stroke-width="1"/><path d="M0.5 4.8 L11.5 4.8 M3.2 0.4 L3.2 2.8 M8.8 0.4 L8.8 2.8" stroke="#9a9a9a" stroke-width="1"/><path d="M2.6 7.2 L9.6 7.2 M2.6 9.8 L9.6 9.8" stroke="#9a9a9a" stroke-width="1.1" stroke-dasharray="1.5 1.2"/></svg><span style="left:30px">无结束</span></div>
</div>
<div class="row sel" style="top:48px">
<div class="cb on" style="left:16px;top:6px"><svg style="left:1px;top:2px" width="11" height="9" viewBox="0 0 11 9"><path d="M1.2 4.6 L4 7.2 L9.6 1.4" fill="none" stroke="#fff" stroke-width="1.9" stroke-linecap="round" stroke-linejoin="round"/></svg></div>
<div class="c lk" style="left:48px;top:3px">演示广告活动</div>
<div class="c" style="left:188px;width:6px;text-align:center">-</div>
<div class="sw"></div>
<div class="c or" style="left:290px">超出预算 08:02</div><div class="abs" style="left:382px;top:8px;width:1px;height:2px;background:#ffc77a"></div>
<div class="c lk" style="left:392px;top:4px">演示广告...</div>
<div class="c" style="left:486px">品牌推广(SB)</div>
<div class="c r" style="right:1018px">US$4.00</div>
<svg style="left:684px;top:6px" width="14" height="14" viewBox="0 0 14 14"><path class="pen" d="M9 0.6 L12.5 3.9 L4.9 11.3 L2.5 11.3 Q1.5 11.3 1.5 10.2 L1.5 7.8 Z"/><path class="pen" d="M0.3 13.5 L13.8 13.5"/></svg>
<div class="bar" style="background:#f43e42"></div>
<div class="c rd" style="left:846px;top:2px">超预算</div>
<div class="sub">超出预算1.11%,已花费4.04U...</div>
<div class="c" style="left:908px">-</div>
<div class="c r" style="right:568px">-</div>
<div class="c r" style="right:485px">-</div>
<div class="c r" style="right:413px">-</div>
<div class="c r" style="right:317px">-</div>
<div class="din s"><svg style="left:12px;top:9px" width="12" height="13" viewBox="0 0 12 13"><rect x="0.5" y="1.8" width="11" height="10.6" rx="1" fill="none" stroke="#9a9a9a" stroke-width="1"/><path d="M0.5 4.8 L11.5 4.8 M3.2 0.4 L3.2 2.8 M8.8 0.4 L8.8 2.8" stroke="#9a9a9a" stroke-width="1"/><path d="M2.6 7.2 L9.6 7.2 M2.6 9.8 L9.6 9.8" stroke="#9a9a9a" stroke-width="1.1" stroke-dasharray="1.5 1.2"/></svg><span style="left:34px">2024-02-28</span></div>
<div class="din e"><svg style="left:10px;top:9px" width="12" height="13" viewBox="0 0 12 13"><rect x="0.5" y="1.8" width="11" height="10.6" rx="1" fill="none" stroke="#9a9a9a" stroke-width="1"/><path d="M0.5 4.8 L11.5 4.8 M3.2 0.4 L3.2 2.8 M8.8 0.4 L8.8 2.8" stroke="#9a9a9a" stroke-width="1"/><path d="M2.6 7.2 L9.6 7.2 M2.6 9.8 L9.6 9.8" stroke="#9a9a9a" stroke-width="1.1" stroke-dasharray="1.5 1.2"/></svg><span style="left:30px">无结束</span></div>
</div>
<div class="row" style="top:96px">
<div class="cb" style="left:16px;top:6px"></div>
<div class="c lk" style="left:48px;top:3px">演示广告活动</div>
<div class="mt">手动投放</div>
<div class="c" style="left:188px;width:6px;text-align:center">-</div>
<div class="sw"></div>
<div class="c gr" style="left:290px">正在投放</div><svg style="left:342px;top:10px" width="9" height="6" viewBox="0 0 9 6"><path d="M0.5 0.6 L4.5 4.8 L8.5 0.6" fill="none" stroke="#8a8a8a" stroke-width="1.1" stroke-linecap="round" stroke-linejoin="round"/></svg>
<div class="c lk" style="left:392px;top:4px">演示广告...</div>
<div class="c" style="left:486px">商品推广(SP)</div>
<div class="c r" style="right:1018px">US$5.00</div>
<svg style="left:684px;top:6px" width="14" height="14" viewBox="0 0 14 14"><path class="pen" d="M9 0.6 L12.5 3.9 L4.9 11.3 L2.5 11.3 Q1.5 11.3 1.5 10.2 L1.5 7.8 Z"/><path class="pen" d="M0.3 13.5 L13.8 13.5"/></svg>
<div class="c" style="left:716px;color:#888">-</div>
<div class="c" style="left:908px">固定竞价</div>
<div class="c r" style="right:590px">0%</div>
<svg style="left:1112px;top:6px" width="14" height="14" viewBox="0 0 14 14"><path class="pen" d="M9 0.6 L12.5 3.9 L4.9 11.3 L2.5 11.3 Q1.5 11.3 1.5 10.2 L1.5 7.8 Z"/><path class="pen" d="M0.3 13.5 L13.8 13.5"/></svg>
<div class="c r" style="right:506px">0%</div>
<svg style="left:1196px;top:6px" width="14" height="14" viewBox="0 0 14 14"><path class="pen" d="M9 0.6 L12.5 3.9 L4.9 11.3 L2.5 11.3 Q1.5 11.3 1.5 10.2 L1.5 7.8 Z"/><path class="pen" d="M0.3 13.5 L13.8 13.5"/></svg>
<div class="c r" style="right:435px">0%</div>
<svg style="left:1267px;top:6px" width="14" height="14" viewBox="0 0 14 14"><path class="pen" d="M9 0.6 L12.5 3.9 L4.9 11.3 L2.5 11.3 Q1.5 11.3 1.5 10.2 L1.5 7.8 Z"/><path class="pen" d="M0.3 13.5 L13.8 13.5"/></svg>
<div class="c r" style="right:339px">%</div>
<svg style="left:1363px;top:6px" width="14" height="14" viewBox="0 0 14 14"><path class="pen" d="M9 0.6 L12.5 3.9 L4.9 11.3 L2.5 11.3 Q1.5 11.3 1.5 10.2 L1.5 7.8 Z"/><path class="pen" d="M0.3 13.5 L13.8 13.5"/></svg>
<div class="din s"><svg style="left:12px;top:9px" width="12" height="13" viewBox="0 0 12 13"><rect x="0.5" y="1.8" width="11" height="10.6" rx="1" fill="none" stroke="#9a9a9a" stroke-width="1"/><path d="M0.5 4.8 L11.5 4.8 M3.2 0.4 L3.2 2.8 M8.8 0.4 L8.8 2.8" stroke="#9a9a9a" stroke-width="1"/><path d="M2.6 7.2 L9.6 7.2 M2.6 9.8 L9.6 9.8" stroke="#9a9a9a" stroke-width="1.1" stroke-dasharray="1.5 1.2"/></svg><span style="left:34px">2023-09-08</span></div>
<div class="din e"><svg style="left:10px;top:9px" width="12" height="13" viewBox="0 0 12 13"><rect x="0.5" y="1.8" width="11" height="10.6" rx="1" fill="none" stroke="#9a9a9a" stroke-width="1"/><path d="M0.5 4.8 L11.5 4.8 M3.2 0.4 L3.2 2.8 M8.8 0.4 L8.8 2.8" stroke="#9a9a9a" stroke-width="1"/><path d="M2.6 7.2 L9.6 7.2 M2.6 9.8 L9.6 9.8" stroke="#9a9a9a" stroke-width="1.1" stroke-dasharray="1.5 1.2"/></svg><span style="left:30px">无结束</span></div>
</div>
<div class="row" style="top:144px">
<div class="cb" style="left:16px;top:6px"></div>
<div class="c lk" style="left:48px;top:3px">演示广告活动</div>
<div class="mt">手动投放</div>
<div class="c" style="left:188px;width:6px;text-align:center">-</div>
<div class="sw"></div>
<div class="c gr" style="left:290px">正在投放</div><svg style="left:342px;top:10px" width="9" height="6" viewBox="0 0 9 6"><path d="M0.5 0.6 L4.5 4.8 L8.5 0.6" fill="none" stroke="#8a8a8a" stroke-width="1.1" stroke-linecap="round" stroke-linejoin="round"/></svg>
<div class="c lk" style="left:392px;top:4px">演示广告...</div>
<div class="c" style="left:486px">商品推广(SP)</div>
<div class="c r" style="right:1018px">US$20.00</div>
<svg style="left:684px;top:6px" width="14" height="14" viewBox="0 0 14 14"><path class="pen" d="M9 0.6 L12.5 3.9 L4.9 11.3 L2.5 11.3 Q1.5 11.3 1.5 10.2 L1.5 7.8 Z"/><path class="pen" d="M0.3 13.5 L13.8 13.5"/></svg>
<div class="c" style="left:716px;color:#888">-</div>
<div class="c" style="left:908px">固定竞价</div>
<div class="c r" style="right:590px">0%</div>
<svg style="left:1112px;top:6px" width="14" height="14" viewBox="0 0 14 14"><path class="pen" d="M9 0.6 L12.5 3.9 L4.9 11.3 L2.5 11.3 Q1.5 11.3 1.5 10.2 L1.5 7.8 Z"/><path class="pen" d="M0.3 13.5 L13.8 13.5"/></svg>
<div class="c r" style="right:506px">0%</div>
<svg style="left:1196px;top:6px" width="14" height="14" viewBox="0 0 14 14"><path class="pen" d="M9 0.6 L12.5 3.9 L4.9 11.3 L2.5 11.3 Q1.5 11.3 1.5 10.2 L1.5 7.8 Z"/><path class="pen" d="M0.3 13.5 L13.8 13.5"/></svg>
<div class="c r" style="right:435px">0%</div>
<svg style="left:1267px;top:6px" width="14" height="14" viewBox="0 0 14 14"><path class="pen" d="M9 0.6 L12.5 3.9 L4.9 11.3 L2.5 11.3 Q1.5 11.3 1.5 10.2 L1.5 7.8 Z"/><path class="pen" d="M0.3 13.5 L13.8 13.5"/></svg>
<div class="c r" style="right:339px">%</div>
<svg style="left:1363px;top:6px" width="14" height="14" viewBox="0 0 14 14"><path class="pen" d="M9 0.6 L12.5 3.9 L4.9 11.3 L2.5 11.3 Q1.5 11.3 1.5 10.2 L1.5 7.8 Z"/><path class="pen" d="M0.3 13.5 L13.8 13.5"/></svg>
<div class="din s"><svg style="left:12px;top:9px" width="12" height="13" viewBox="0 0 12 13"><rect x="0.5" y="1.8" width="11" height="10.6" rx="1" fill="none" stroke="#9a9a9a" stroke-width="1"/><path d="M0.5 4.8 L11.5 4.8 M3.2 0.4 L3.2 2.8 M8.8 0.4 L8.8 2.8" stroke="#9a9a9a" stroke-width="1"/><path d="M2.6 7.2 L9.6 7.2 M2.6 9.8 L9.6 9.8" stroke="#9a9a9a" stroke-width="1.1" stroke-dasharray="1.5 1.2"/></svg><span style="left:34px">2023-09-08</span></div>
<div class="din e"><svg style="left:10px;top:9px" width="12" height="13" viewBox="0 0 12 13"><rect x="0.5" y="1.8" width="11" height="10.6" rx="1" fill="none" stroke="#9a9a9a" stroke-width="1"/><path d="M0.5 4.8 L11.5 4.8 M3.2 0.4 L3.2 2.8 M8.8 0.4 L8.8 2.8" stroke="#9a9a9a" stroke-width="1"/><path d="M2.6 7.2 L9.6 7.2 M2.6 9.8 L9.6 9.8" stroke="#9a9a9a" stroke-width="1.1" stroke-dasharray="1.5 1.2"/></svg><span style="left:30px">无结束</span></div>
</div>
<div class="row" style="top:192px">
<div class="cb" style="left:16px;top:6px"></div>
<div class="c lk" style="left:48px;top:3px">演示广告活动</div>
<div class="mt">手动投放</div>
<div class="c" style="left:188px;width:6px;text-align:center">-</div>
<div class="sw"></div>
<div class="c gr" style="left:290px">正在投放</div><svg style="left:342px;top:10px" width="9" height="6" viewBox="0 0 9 6"><path d="M0.5 0.6 L4.5 4.8 L8.5 0.6" fill="none" stroke="#8a8a8a" stroke-width="1.1" stroke-linecap="round" stroke-linejoin="round"/></svg>
<div class="c lk" style="left:392px;top:4px">演示广告...</div>
<div class="c" style="left:486px">商品推广(SP)</div>
<div class="c r" style="right:1018px">US$5.00</div>
<svg style="left:684px;top:6px" width="14" height="14" viewBox="0 0 14 14"><path class="pen" d="M9 0.6 L12.5 3.9 L4.9 11.3 L2.5 11.3 Q1.5 11.3 1.5 10.2 L1.5 7.8 Z"/><path class="pen" d="M0.3 13.5 L13.8 13.5"/></svg>
<div class="c" style="left:716px;color:#888">-</div>
<div class="c" style="left:908px">固定竞价</div>
<div class="c r" style="right:590px">0%</div>
<svg style="left:1112px;top:6px" width="14" height="14" viewBox="0 0 14 14"><path class="pen" d="M9 0.6 L12.5 3.9 L4.9 11.3 L2.5 11.3 Q1.5 11.3 1.5 10.2 L1.5 7.8 Z"/><path class="pen" d="M0.3 13.5 L13.8 13.5"/></svg>
<div class="c r" style="right:506px">0%</div>
<svg style="left:1196px;top:6px" width="14" height="14" viewBox="0 0 14 14"><path class="pen" d="M9 0.6 L12.5 3.9 L4.9 11.3 L2.5 11.3 Q1.5 11.3 1.5 10.2 L1.5 7.8 Z"/><path class="pen" d="M0.3 13.5 L13.8 13.5"/></svg>
<div class="c r" style="right:435px">0%</div>
<svg style="left:1267px;top:6px" width="14" height="14" viewBox="0 0 14 14"><path class="pen" d="M9 0.6 L12.5 3.9 L4.9 11.3 L2.5 11.3 Q1.5 11.3 1.5 10.2 L1.5 7.8 Z"/><path class="pen" d="M0.3 13.5 L13.8 13.5"/></svg>
<div class="c r" style="right:339px">%</div>
<svg style="left:1363px;top:6px" width="14" height="14" viewBox="0 0 14 14"><path class="pen" d="M9 0.6 L12.5 3.9 L4.9 11.3 L2.5 11.3 Q1.5 11.3 1.5 10.2 L1.5 7.8 Z"/><path class="pen" d="M0.3 13.5 L13.8 13.5"/></svg>
<div class="din s"><svg style="left:12px;top:9px" width="12" height="13" viewBox="0 0 12 13"><rect x="0.5" y="1.8" width="11" height="10.6" rx="1" fill="none" stroke="#9a9a9a" stroke-width="1"/><path d="M0.5 4.8 L11.5 4.8 M3.2 0.4 L3.2 2.8 M8.8 0.4 L8.8 2.8" stroke="#9a9a9a" stroke-width="1"/><path d="M2.6 7.2 L9.6 7.2 M2.6 9.8 L9.6 9.8" stroke="#9a9a9a" stroke-width="1.1" stroke-dasharray="1.5 1.2"/></svg><span style="left:34px">2023-09-08</span></div>
<div class="din e"><svg style="left:10px;top:9px" width="12" height="13" viewBox="0 0 12 13"><rect x="0.5" y="1.8" width="11" height="10.6" rx="1" fill="none" stroke="#9a9a9a" stroke-width="1"/><path d="M0.5 4.8 L11.5 4.8 M3.2 0.4 L3.2 2.8 M8.8 0.4 L8.8 2.8" stroke="#9a9a9a" stroke-width="1"/><path d="M2.6 7.2 L9.6 7.2 M2.6 9.8 L9.6 9.8" stroke="#9a9a9a" stroke-width="1.1" stroke-dasharray="1.5 1.2"/></svg><span style="left:30px">无结束</span></div>
</div>
<div class="row" style="top:240px">
<div class="cb" style="left:16px;top:6px"></div>
<div class="c lk" style="left:48px;top:3px">演示广告活动</div>
<div class="mt">手动投放</div>
<div class="c" style="left:188px;width:6px;text-align:center">-</div>
<div class="sw"></div>
<div class="c gr" style="left:290px">正在投放</div><svg style="left:342px;top:10px" width="9" height="6" viewBox="0 0 9 6"><path d="M0.5 0.6 L4.5 4.8 L8.5 0.6" fill="none" stroke="#8a8a8a" stroke-width="1.1" stroke-linecap="round" stroke-linejoin="round"/></svg>
<div class="c lk" style="left:392px;top:4px">演示广告...</div>
<div class="c" style="left:486px">商品推广(SP)</div>
<div class="c r" style="right:1018px">US$30.00</div>
<svg style="left:684px;top:6px" width="14" height="14" viewBox="0 0 14 14"><path class="pen" d="M9 0.6 L12.5 3.9 L4.9 11.3 L2.5 11.3 Q1.5 11.3 1.5 10.2 L1.5 7.8 Z"/><path class="pen" d="M0.3 13.5 L13.8 13.5"/></svg>
<div class="c" style="left:716px;color:#888">-</div>
<div class="c" style="left:908px">固定竞价</div>
<div class="c r" style="right:590px">0%</div>
<svg style="left:1112px;top:6px" width="14" height="14" viewBox="0 0 14 14"><path class="pen" d="M9 0.6 L12.5 3.9 L4.9 11.3 L2.5 11.3 Q1.5 11.3 1.5 10.2 L1.5 7.8 Z"/><path class="pen" d="M0.3 13.5 L13.8 13.5"/></svg>
<div class="c r" style="right:506px">0%</div>
<svg style="left:1196px;top:6px" width="14" height="14" viewBox="0 0 14 14"><path class="pen" d="M9 0.6 L12.5 3.9 L4.9 11.3 L2.5 11.3 Q1.5 11.3 1.5 10.2 L1.5 7.8 Z"/><path class="pen" d="M0.3 13.5 L13.8 13.5"/></svg>
<div class="c r" style="right:435px">0%</div>
<svg style="left:1267px;top:6px" width="14" height="14" viewBox="0 0 14 14"><path class="pen" d="M9 0.6 L12.5 3.9 L4.9 11.3 L2.5 11.3 Q1.5 11.3 1.5 10.2 L1.5 7.8 Z"/><path class="pen" d="M0.3 13.5 L13.8 13.5"/></svg>
<div class="c r" style="right:339px">%</div>
<svg style="left:1363px;top:6px" width="14" height="14" viewBox="0 0 14 14"><path class="pen" d="M9 0.6 L12.5 3.9 L4.9 11.3 L2.5 11.3 Q1.5 11.3 1.5 10.2 L1.5 7.8 Z"/><path class="pen" d="M0.3 13.5 L13.8 13.5"/></svg>
<div class="din s"><svg style="left:12px;top:9px" width="12" height="13" viewBox="0 0 12 13"><rect x="0.5" y="1.8" width="11" height="10.6" rx="1" fill="none" stroke="#9a9a9a" stroke-width="1"/><path d="M0.5 4.8 L11.5 4.8 M3.2 0.4 L3.2 2.8 M8.8 0.4 L8.8 2.8" stroke="#9a9a9a" stroke-width="1"/><path d="M2.6 7.2 L9.6 7.2 M2.6 9.8 L9.6 9.8" stroke="#9a9a9a" stroke-width="1.1" stroke-dasharray="1.5 1.2"/></svg><span style="left:34px">2023-09-13</span></div>
<div class="din e"><svg style="left:10px;top:9px" width="12" height="13" viewBox="0 0 12 13"><rect x="0.5" y="1.8" width="11" height="10.6" rx="1" fill="none" stroke="#9a9a9a" stroke-width="1"/><path d="M0.5 4.8 L11.5 4.8 M3.2 0.4 L3.2 2.8 M8.8 0.4 L8.8 2.8" stroke="#9a9a9a" stroke-width="1"/><path d="M2.6 7.2 L9.6 7.2 M2.6 9.8 L9.6 9.8" stroke="#9a9a9a" stroke-width="1.1" stroke-dasharray="1.5 1.2"/></svg><span style="left:30px">无结束</span></div>
</div>
<div class="row" style="top:288px">
<div class="cb" style="left:16px;top:6px"></div>
<div class="c lk" style="left:48px;top:3px">演示广告活动</div>
<div class="mt">手动投放</div>
<div class="c" style="left:188px;width:6px;text-align:center">-</div>
<div class="sw"></div>
<div class="c gr" style="left:290px">正在投放</div><svg style="left:342px;top:10px" width="9" height="6" viewBox="0 0 9 6"><path d="M0.5 0.6 L4.5 4.8 L8.5 0.6" fill="none" stroke="#8a8a8a" stroke-width="1.1" stroke-linecap="round" stroke-linejoin="round"/></svg>
<div class="c lk" style="left:392px;top:4px">演示广告...</div>
<div class="c" style="left:486px">商品推广(SP)</div>
<div class="c r" style="right:1018px">￡10.00</div>
<svg style="left:684px;top:6px" width="14" height="14" viewBox="0 0 14 14"><path class="pen" d="M9 0.6 L12.5 3.9 L4.9 11.3 L2.5 11.3 Q1.5 11.3 1.5 10.2 L1.5 7.8 Z"/><path class="pen" d="M0.3 13.5 L13.8 13.5"/></svg>
<div class="c" style="left:716px;color:#888">-</div>
<div class="c" style="left:908px">固定竞价</div>
<div class="c r" style="right:590px">0%</div>
<svg style="left:1112px;top:6px" width="14" height="14" viewBox="0 0 14 14"><path class="pen" d="M9 0.6 L12.5 3.9 L4.9 11.3 L2.5 11.3 Q1.5 11.3 1.5 10.2 L1.5 7.8 Z"/><path class="pen" d="M0.3 13.5 L13.8 13.5"/></svg>
<div class="c r" style="right:506px">0%</div>
<svg style="left:1196px;top:6px" width="14" height="14" viewBox="0 0 14 14"><path class="pen" d="M9 0.6 L12.5 3.9 L4.9 11.3 L2.5 11.3 Q1.5 11.3 1.5 10.2 L1.5 7.8 Z"/><path class="pen" d="M0.3 13.5 L13.8 13.5"/></svg>
<div class="c r" style="right:435px">0%</div>
<svg style="left:1267px;top:6px" width="14" height="14" viewBox="0 0 14 14"><path class="pen" d="M9 0.6 L12.5 3.9 L4.9 11.3 L2.5 11.3 Q1.5 11.3 1.5 10.2 L1.5 7.8 Z"/><path class="pen" d="M0.3 13.5 L13.8 13.5"/></svg>
<div class="c r" style="right:339px">%</div>
<svg style="left:1363px;top:6px" width="14" height="14" viewBox="0 0 14 14"><path class="pen" d="M9 0.6 L12.5 3.9 L4.9 11.3 L2.5 11.3 Q1.5 11.3 1.5 10.2 L1.5 7.8 Z"/><path class="pen" d="M0.3 13.5 L13.8 13.5"/></svg>
<div class="din s"><svg style="left:12px;top:9px" width="12" height="13" viewBox="0 0 12 13"><rect x="0.5" y="1.8" width="11" height="10.6" rx="1" fill="none" stroke="#9a9a9a" stroke-width="1"/><path d="M0.5 4.8 L11.5 4.8 M3.2 0.4 L3.2 2.8 M8.8 0.4 L8.8 2.8" stroke="#9a9a9a" stroke-width="1"/><path d="M2.6 7.2 L9.6 7.2 M2.6 9.8 L9.6 9.8" stroke="#9a9a9a" stroke-width="1.1" stroke-dasharray="1.5 1.2"/></svg><span style="left:34px">2024-03-13</span></div>
<div class="din e"><svg style="left:10px;top:9px" width="12" height="13" viewBox="0 0 12 13"><rect x="0.5" y="1.8" width="11" height="10.6" rx="1" fill="none" stroke="#9a9a9a" stroke-width="1"/><path d="M0.5 4.8 L11.5 4.8 M3.2 0.4 L3.2 2.8 M8.8 0.4 L8.8 2.8" stroke="#9a9a9a" stroke-width="1"/><path d="M2.6 7.2 L9.6 7.2 M2.6 9.8 L9.6 9.8" stroke="#9a9a9a" stroke-width="1.1" stroke-dasharray="1.5 1.2"/></svg><span style="left:30px">无结束</span></div>
</div>
<div class="row" style="top:336px">
<div class="cb" style="left:16px;top:6px"></div>
<div class="c lk" style="left:48px;top:3px">演示广告活动</div>
<div class="c" style="left:188px;width:6px;text-align:center">-</div>
<div class="sw"></div>
<div class="c or" style="left:290px">超出预算 14:51</div><div class="abs" style="left:382px;top:8px;width:1px;height:2px;background:#ffc77a"></div>
<div class="c lk" style="left:392px;top:4px">演示广告...</div>
<div class="c" style="left:486px">品牌推广(SB)</div>
<div class="c r" style="right:1018px">US$5.00</div>
<svg style="left:684px;top:6px" width="14" height="14" viewBox="0 0 14 14"><path class="pen" d="M9 0.6 L12.5 3.9 L4.9 11.3 L2.5 11.3 Q1.5 11.3 1.5 10.2 L1.5 7.8 Z"/><path class="pen" d="M0.3 13.5 L13.8 13.5"/></svg>
<div class="bar" style="background:#f43e42"></div>
<div class="c rd" style="left:846px;top:2px">超预算</div>
<div class="sub">超出预算3.93%,已花费5.20U...</div>
<div class="c" style="left:908px">-</div>
<div class="c r" style="right:568px">-</div>
<div class="c r" style="right:485px">-</div>
<div class="c r" style="right:413px">-</div>
<div class="c r" style="right:317px">-</div>
<div class="din s"><svg style="left:12px;top:9px" width="12" height="13" viewBox="0 0 12 13"><rect x="0.5" y="1.8" width="11" height="10.6" rx="1" fill="none" stroke="#9a9a9a" stroke-width="1"/><path d="M0.5 4.8 L11.5 4.8 M3.2 0.4 L3.2 2.8 M8.8 0.4 L8.8 2.8" stroke="#9a9a9a" stroke-width="1"/><path d="M2.6 7.2 L9.6 7.2 M2.6 9.8 L9.6 9.8" stroke="#9a9a9a" stroke-width="1.1" stroke-dasharray="1.5 1.2"/></svg><span style="left:34px">2024-05-30</span></div>
<div class="din e"><svg style="left:10px;top:9px" width="12" height="13" viewBox="0 0 12 13"><rect x="0.5" y="1.8" width="11" height="10.6" rx="1" fill="none" stroke="#9a9a9a" stroke-width="1"/><path d="M0.5 4.8 L11.5 4.8 M3.2 0.4 L3.2 2.8 M8.8 0.4 L8.8 2.8" stroke="#9a9a9a" stroke-width="1"/><path d="M2.6 7.2 L9.6 7.2 M2.6 9.8 L9.6 9.8" stroke="#9a9a9a" stroke-width="1.1" stroke-dasharray="1.5 1.2"/></svg><span style="left:30px">无结束</span></div>
</div>
<div class="row" style="top:384px">
<div class="cb" style="left:16px;top:6px"></div>
<div class="c lk" style="left:48px;top:3px">演示广告活动</div>
<div class="mt">手动投放</div>
<div class="c" style="left:188px;width:6px;text-align:center">-</div>
<div class="sw"></div>
<div class="c gr" style="left:290px">正在投放</div><svg style="left:342px;top:10px" width="9" height="6" viewBox="0 0 9 6"><path d="M0.5 0.6 L4.5 4.8 L8.5 0.6" fill="none" stroke="#8a8a8a" stroke-width="1.1" stroke-linecap="round" stroke-linejoin="round"/></svg>
<div class="c lk" style="left:392px;top:4px">演示广告...</div>
<div class="c" style="left:486px">商品推广(SP)</div>
<div class="c r" style="right:1018px">US$6.00</div>
<svg style="left:684px;top:6px" width="14" height="14" viewBox="0 0 14 14"><path class="pen" d="M9 0.6 L12.5 3.9 L4.9 11.3 L2.5 11.3 Q1.5 11.3 1.5 10.2 L1.5 7.8 Z"/><path class="pen" d="M0.3 13.5 L13.8 13.5"/></svg>
<div class="c" style="left:716px;color:#888">-</div>
<div class="c" style="left:908px">固定竞价</div>
<div class="c r" style="right:590px">0%</div>
<svg style="left:1112px;top:6px" width="14" height="14" viewBox="0 0 14 14"><path class="pen" d="M9 0.6 L12.5 3.9 L4.9 11.3 L2.5 11.3 Q1.5 11.3 1.5 10.2 L1.5 7.8 Z"/><path class="pen" d="M0.3 13.5 L13.8 13.5"/></svg>
<div class="c r" style="right:506px">0%</div>
<svg style="left:1196px;top:6px" width="14" height="14" viewBox="0 0 14 14"><path class="pen" d="M9 0.6 L12.5 3.9 L4.9 11.3 L2.5 11.3 Q1.5 11.3 1.5 10.2 L1.5 7.8 Z"/><path class="pen" d="M0.3 13.5 L13.8 13.5"/></svg>
<div class="c r" style="right:435px">0%</div>
<svg style="left:1267px;top:6px" width="14" height="14" viewBox="0 0 14 14"><path class="pen" d="M9 0.6 L12.5 3.9 L4.9 11.3 L2.5 11.3 Q1.5 11.3 1.5 10.2 L1.5 7.8 Z"/><path class="pen" d="M0.3 13.5 L13.8 13.5"/></svg>
<div class="c r" style="right:339px">%</div>
<svg style="left:1363px;top:6px" width="14" height="14" viewBox="0 0 14 14"><path class="pen" d="M9 0.6 L12.5 3.9 L4.9 11.3 L2.5 11.3 Q1.5 11.3 1.5 10.2 L1.5 7.8 Z"/><path class="pen" d="M0.3 13.5 L13.8 13.5"/></svg>
<div class="din s"><svg style="left:12px;top:9px" width="12" height="13" viewBox="0 0 12 13"><rect x="0.5" y="1.8" width="11" height="10.6" rx="1" fill="none" stroke="#9a9a9a" stroke-width="1"/><path d="M0.5 4.8 L11.5 4.8 M3.2 0.4 L3.2 2.8 M8.8 0.4 L8.8 2.8" stroke="#9a9a9a" stroke-width="1"/><path d="M2.6 7.2 L9.6 7.2 M2.6 9.8 L9.6 9.8" stroke="#9a9a9a" stroke-width="1.1" stroke-dasharray="1.5 1.2"/></svg><span style="left:34px">2024-06-10</span></div>
<div class="din e"><svg style="left:10px;top:9px" width="12" height="13" viewBox="0 0 12 13"><rect x="0.5" y="1.8" width="11" height="10.6" rx="1" fill="none" stroke="#9a9a9a" stroke-width="1"/><path d="M0.5 4.8 L11.5 4.8 M3.2 0.4 L3.2 2.8 M8.8 0.4 L8.8 2.8" stroke="#9a9a9a" stroke-width="1"/><path d="M2.6 7.2 L9.6 7.2 M2.6 9.8 L9.6 9.8" stroke="#9a9a9a" stroke-width="1.1" stroke-dasharray="1.5 1.2"/></svg><span style="left:30px">无结束</span></div>
</div>
<div class="row" style="top:432px">
<div class="cb" style="left:16px;top:6px"></div>
<div class="c lk" style="left:48px;top:3px">演示广告活动</div>
<div class="c" style="left:188px;width:6px;text-align:center">-</div>
<div class="sw"></div>
<div class="c gr" style="left:290px">正在投放</div><svg style="left:342px;top:10px" width="9" height="6" viewBox="0 0 9 6"><path d="M0.5 0.6 L4.5 4.8 L8.5 0.6" fill="none" stroke="#8a8a8a" stroke-width="1.1" stroke-linecap="round" stroke-linejoin="round"/></svg>
<div class="c lk" style="left:392px;top:4px">演示广告...</div>
<div class="c" style="left:486px">品牌推广(SB)</div>
<div class="c r" style="right:1018px">US$4.00</div>
<svg style="left:684px;top:6px" width="14" height="14" viewBox="0 0 14 14"><path class="pen" d="M9 0.6 L12.5 3.9 L4.9 11.3 L2.5 11.3 Q1.5 11.3 1.5 10.2 L1.5 7.8 Z"/><path class="pen" d="M0.3 13.5 L13.8 13.5"/></svg>
<div class="bar" style="background:#0a84ff"></div>
<div class="c" style="left:846px;top:3px;color:#0a84ff">100.00%</div>
<div class="sub">剩余4.00US$,已花费0.00US$</div>
<div class="c" style="left:908px">-</div>
<div class="c r" style="right:568px">-</div>
<div class="c r" style="right:485px">-</div>
<div class="c r" style="right:413px">-</div>
<div class="c r" style="right:317px">-</div>
<div class="din s"><svg style="left:12px;top:9px" width="12" height="13" viewBox="0 0 12 13"><rect x="0.5" y="1.8" width="11" height="10.6" rx="1" fill="none" stroke="#9a9a9a" stroke-width="1"/><path d="M0.5 4.8 L11.5 4.8 M3.2 0.4 L3.2 2.8 M8.8 0.4 L8.8 2.8" stroke="#9a9a9a" stroke-width="1"/><path d="M2.6 7.2 L9.6 7.2 M2.6 9.8 L9.6 9.8" stroke="#9a9a9a" stroke-width="1.1" stroke-dasharray="1.5 1.2"/></svg><span style="left:34px">2024-04-26</span></div>
<div class="din e"><svg style="left:10px;top:9px" width="12" height="13" viewBox="0 0 12 13"><rect x="0.5" y="1.8" width="11" height="10.6" rx="1" fill="none" stroke="#9a9a9a" stroke-width="1"/><path d="M0.5 4.8 L11.5 4.8 M3.2 0.4 L3.2 2.8 M8.8 0.4 L8.8 2.8" stroke="#9a9a9a" stroke-width="1"/><path d="M2.6 7.2 L9.6 7.2 M2.6 9.8 L9.6 9.8" stroke="#9a9a9a" stroke-width="1.1" stroke-dasharray="1.5 1.2"/></svg><span style="left:30px">无结束</span></div>
</div>
</div>
<div id="fixsh" class="abs" style="left:1820px;top:293px;width:10px;height:574px;background:linear-gradient(90deg,rgba(0,0,0,0),rgba(0,0,0,.07))"></div>
<div id="fixc" class="abs" style="left:1830px;top:293px;width:82px;height:574px;background:#fff;overflow:hidden">
<div class="th" style="left:8px;top:14px">操作</div>
<div class="abs" style="left:0;top:46px;width:82px;height:1px;background:#e8e9ed"></div>
<div class="t lk" style="left:16px;top:62px">分析</div>
<div class="abs" style="left:0;top:94px;width:82px;height:1px;background:#e8e9ed"></div>
<div class="abs" style="left:0;top:94px;width:82px;height:48px;background:#ecf5ff;box-shadow:inset 0 1px 0 #e8e9ed"><div class="t lk" style="left:8px;top:4px">分析</div><div class="abs" style="left:45px;top:10px;width:3px;height:3px;border-radius:2px;background:#0a84ff;box-shadow:4px 0 0 #0a84ff,8px 0 0 #0a84ff"></div></div>
<div class="abs" style="left:0;top:142px;width:82px;height:48px;background:#ecf5ff;box-shadow:inset 0 1px 0 #e8e9ed"><div class="t lk" style="left:8px;top:4px">分析</div><div class="abs" style="left:45px;top:10px;width:3px;height:3px;border-radius:2px;background:#0a84ff;box-shadow:4px 0 0 #0a84ff,8px 0 0 #0a84ff"></div></div>
<div class="abs" style="left:0;top:190px;width:82px;height:48px;background:#fff;box-shadow:inset 0 1px 0 #e8e9ed"><div class="t lk" style="left:8px;top:4px">分析</div><div class="abs" style="left:45px;top:10px;width:3px;height:3px;border-radius:2px;background:#0a84ff;box-shadow:4px 0 0 #0a84ff,8px 0 0 #0a84ff"></div></div>
<div class="abs" style="left:0;top:238px;width:82px;height:48px;background:#fff;box-shadow:inset 0 1px 0 #e8e9ed"><div class="t lk" style="left:8px;top:4px">分析</div><div class="abs" style="left:45px;top:10px;width:3px;height:3px;border-radius:2px;background:#0a84ff;box-shadow:4px 0 0 #0a84ff,8px 0 0 #0a84ff"></div></div>
<div class="abs" style="left:0;top:286px;width:82px;height:48px;background:#fff;box-shadow:inset 0 1px 0 #e8e9ed"><div class="t lk" style="left:8px;top:4px">分析</div><div class="abs" style="left:45px;top:10px;width:3px;height:3px;border-radius:2px;background:#0a84ff;box-shadow:4px 0 0 #0a84ff,8px 0 0 #0a84ff"></div></div>
<div class="abs" style="left:0;top:334px;width:82px;height:48px;background:#fff;box-shadow:inset 0 1px 0 #e8e9ed"><div class="t lk" style="left:8px;top:4px">分析</div><div class="abs" style="left:45px;top:10px;width:3px;height:3px;border-radius:2px;background:#0a84ff;box-shadow:4px 0 0 #0a84ff,8px 0 0 #0a84ff"></div></div>
<div class="abs" style="left:0;top:382px;width:82px;height:48px;background:#fff;box-shadow:inset 0 1px 0 #e8e9ed"><div class="t lk" style="left:8px;top:4px">分析</div><div class="abs" style="left:45px;top:10px;width:3px;height:3px;border-radius:2px;background:#0a84ff;box-shadow:4px 0 0 #0a84ff,8px 0 0 #0a84ff"></div></div>
<div class="abs" style="left:0;top:430px;width:82px;height:48px;background:#fff;box-shadow:inset 0 1px 0 #e8e9ed"><div class="t lk" style="left:8px;top:4px">分析</div><div class="abs" style="left:45px;top:10px;width:3px;height:3px;border-radius:2px;background:#0a84ff;box-shadow:4px 0 0 #0a84ff,8px 0 0 #0a84ff"></div></div>
<div class="abs" style="left:0;top:478px;width:82px;height:48px;background:#fff;box-shadow:inset 0 1px 0 #e8e9ed"><div class="t lk" style="left:8px;top:4px">分析</div><div class="abs" style="left:45px;top:10px;width:3px;height:3px;border-radius:2px;background:#0a84ff;box-shadow:4px 0 0 #0a84ff,8px 0 0 #0a84ff"></div></div>
<div class="abs" style="left:0;top:526px;width:82px;height:48px;background:#fff;box-shadow:inset 0 1px 0 #e8e9ed"><div class="t lk" style="left:8px;top:4px">分析</div><div class="abs" style="left:45px;top:10px;width:3px;height:3px;border-radius:2px;background:#0a84ff;box-shadow:4px 0 0 #0a84ff,8px 0 0 #0a84ff"></div></div>
</div>
<div class="abs" style="left:1912px;top:388px;width:7px;height:479px;background:#fff"></div>
<div class="abs" style="left:1912px;top:388px;width:7px;height:245px;border-radius:4px 0 0 4px;background:#d0d1d4"></div>

<!-- dropdown -->
<div class="abs" style="left:343px;top:286px;width:102px;height:266px;background:#fff;border:1px solid #ebeef5;border-radius:4px;box-shadow:0 2px 10px rgba(0,0,0,.1)"></div>
<div class="t" style="left:358px;top:299px;color:#444">移动广告组合</div>
<div class="t" style="left:358px;top:331px;color:#444">移除广告组合</div>
<div class="t" style="left:358px;top:363px;color:#444">每日预算</div>
<div class="t" style="left:358px;top:395px;color:#444">开启</div>
<div class="t" style="left:358px;top:427px;color:#444">暂停</div>
<div class="t" style="left:358px;top:459px;color:#444">归档</div>
<div class="t" style="left:358px;top:491px;color:#444">分时调预算</div>
<div class="t" style="left:358px;top:523px;color:#444">自动化规则</div>
<!-- red boxes -->
<div class="redbox" style="left:339px;top:246px;width:110px;height:311px"></div>
<div class="redbox" style="left:225px;top:382px;width:45px;height:93px"></div>
<!-- tooltip 1 -->
<div class="num" style="left:0;top:491px">1</div>
<svg style="left:35px;top:498px" width="9" height="16" viewBox="0 0 9 16"><path d="M9 0.2 L9 15.8 L0.6 8 Z" fill="rgba(0,0,0,.6)"/></svg>
<div class="ov" style="left:44px;top:481px;width:291px;height:50px;line-height:51px;padding-left:9px">勾选需要修改的广告活动</div>
<!-- tooltip 2 -->
<div class="num" style="left:455px;top:350px">2</div>
<svg style="left:490px;top:357px" width="9" height="16" viewBox="0 0 9 16"><path d="M9 0.2 L9 15.8 L0.6 8 Z" fill="rgba(0,0,0,.6)"/></svg>
<div class="ov" style="left:499px;top:340px;width:1022px;height:50px;line-height:52px;padding-left:9px">支持移动/移除广告组合、每日预算、分时调预算、调整自动化规则、开启、暂停以及归档操作</div>
<!-- help bubble -->
<svg style="left:1886px;top:840px" width="32" height="32" viewBox="0 0 32 32"><defs><linearGradient id="hg" x1="0" y1="0" x2="1" y2="1"><stop offset="0" stop-color="#6cbcff"/><stop offset="1" stop-color="#0668d6"/></linearGradient></defs><circle cx="15.5" cy="15.5" r="13.6" fill="url(#hg)"/><path d="M21 25.5 L27.6 28.4 L25.6 21 Z" fill="#0a6ad6"/><text x="15.6" y="23.2" text-anchor="middle" font-family="Liberation Sans,sans-serif" font-weight="700" font-size="21" fill="#fff">?</text></svg>

</body>
</html>
